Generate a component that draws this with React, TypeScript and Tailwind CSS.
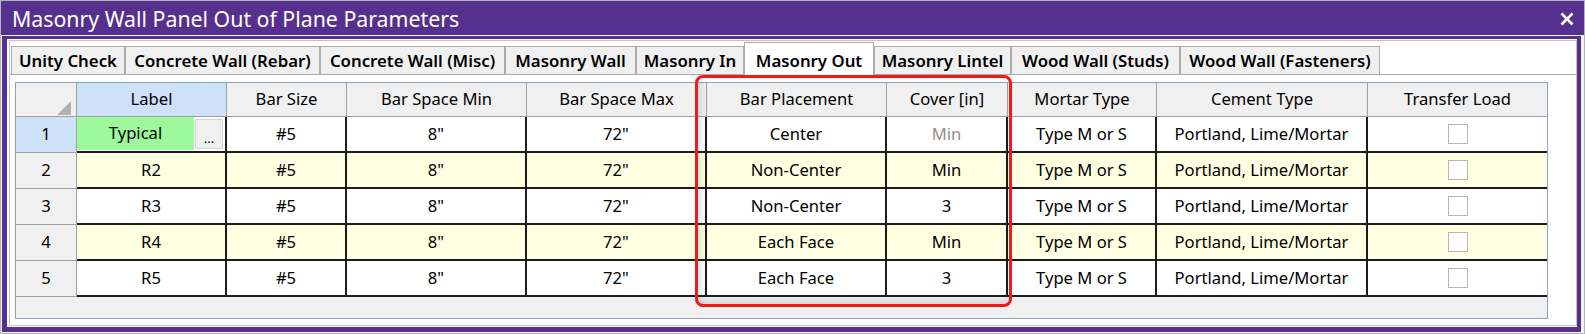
import { Fragment } from 'react';

const tabs = [
    { label: 'Unity Check', w: 'w-[114px]' },
    { label: 'Concrete Wall (Rebar)', w: 'w-[195px]' },
    { label: 'Concrete Wall (Misc)', w: 'w-[185px]' },
    { label: 'Masonry Wall', w: 'w-[131px]' },
    { label: 'Masonry In', w: 'w-[108px]' },
    { label: 'Masonry Out', w: 'w-[130px]', active: true },
    { label: 'Masonry Lintel', w: 'w-[137px]' },
    { label: 'Wood Wall (Studs)', w: 'w-[169px]' },
    { label: 'Wood Wall (Fasteners)', w: 'w-[200px]' },
];

const headers = [
    'Label',
    'Bar Size',
    'Bar Space Min',
    'Bar Space Max',
    'Bar Placement',
    'Cover [in]',
    'Mortar Type',
    'Cement Type',
    'Transfer Load',
];

const rows = [
    { n: 1, label: 'Typical', placement: 'Center', cover: 'Min' },
    { n: 2, label: 'R2', placement: 'Non-Center', cover: 'Min' },
    { n: 3, label: 'R3', placement: 'Non-Center', cover: '3' },
    { n: 4, label: 'R4', placement: 'Each Face', cover: 'Min' },
    { n: 5, label: 'R5', placement: 'Each Face', cover: '3' },
];

export default function App() {
    return (
        <div className="w-[1585px] h-[334px] flex flex-col border border-[#b4b4b4] bg-[#f4f4f4] font-['Noto_Sans',sans-serif] text-black overflow-hidden">
            {/* Title bar */}
            <div className="h-[34px] shrink-0 bg-[#56308e] flex items-center justify-between pl-[11px] pr-[10px] pt-[1px]">
                <span className="text-white text-[21.3px] leading-none">Masonry Wall Panel Out of Plane Parameters</span>
                <svg width="14" height="14" viewBox="0 0 14 14" className="mt-[1px]">
                    <path d="M1.5 1.5 L12.5 12.5 M12.5 1.5 L1.5 12.5" stroke="#fff" strokeWidth="2.6" />
                </svg>
            </div>

            {/* Window frame */}
            <div className="flex-1 flex flex-col mt-[1px] ml-[1px] mr-[3px] mb-[1px] border-[#56308e] border-t-[3px] border-l-[5px] border-r-[4px] border-b-[5px] bg-white pt-[1px] pl-[2px] pb-[1px]">
                <div className="flex-1 flex flex-col border border-[#c4c4c4] bg-white">
                    {/* Tabs */}
                    <div className="h-[33px] shrink-0 flex items-end pl-[1px]">
                        {tabs.map((t) =>
                            t.active ? (
                                <div
                                    key={t.label}
                                    className={`${t.w} h-[33px] -mb-px pt-[4px] pb-[1px] relative z-10 flex items-center justify-center border border-b-0 border-[#acacac] bg-white text-[16.8px] font-semibold`}
                                >
                                    {t.label}
                                </div>
                            ) : (
                                <div
                                    key={t.label}
                                    className={`${t.w} h-[28px] flex items-center justify-center border border-b-0 border-[#acacac] bg-[#f0f0f0] text-[16.8px] font-semibold`}
                                >
                                    {t.label}
                                </div>
                            )
                        )}
                    </div>

                    {/* Tab content */}
                    <div className="flex-1 border-t border-[#acacac] pt-[7px] pl-[5px]">
                        <div className="relative w-[1533px] h-[237px] border border-[#8ea4bd] bg-[#f0f0f0]">
                            <div className="grid grid-cols-[61px_150px_120px_180px_180px_180px_121px_149px_211px_179px] text-[16.6px]">
                                {/* Header row */}
                                <div className="h-[34px] border-r border-b border-[#a0a0a0] bg-[#f0f0f0] flex items-end justify-end pr-[5px] pb-[1px]">
                                    <svg width="14" height="14" viewBox="0 0 14 14">
                                        <polygon points="14,0 14,14 0,14" fill="#b1b1b1" />
                                    </svg>
                                </div>
                                {headers.map((h, i) => (
                                    <div
                                        key={h}
                                        className={`h-[34px] border-b border-[#a0a0a0] flex items-center justify-center ${
                                            i === 0 ? 'bg-[#cde1f9]' : 'bg-[#f0f0f0]'
                                        } ${i === headers.length - 1 ? '' : 'border-r'}`}
                                    >
                                        {h}
                                    </div>
                                ))}

                                {/* Data rows */}
                                {rows.map((r) => {
                                    const bg = r.n % 2 === 0 ? 'bg-[#ffffe1]' : 'bg-white';
                                    const cell = `h-[36px] border-b-2 border-r-2 border-[#1c1c1c] flex items-center justify-center ${bg}`;
                                    return (
                                        <Fragment key={r.n}>
                                            <div
                                                className={`h-[36px] border-r border-b border-[#a0a0a0] flex items-center justify-center ${
                                                    r.n === 1 ? 'bg-[#cde1f9]' : 'bg-[#f0f0f0]'
                                                }`}
                                            >
                                                {r.n}
                                            </div>
                                            {r.n === 1 ? (
                                                <div className="h-[36px] border-b-2 border-r-2 border-[#1c1c1c] flex bg-white">
                                                    <div className="flex-1 bg-[#9cfa9c] flex items-center justify-center mb-[1px]">
                                                        {r.label}
                                                    </div>
                                                    <div className="w-[28px] my-[2px] ml-[1px] mr-[2px] border border-[#cfd6cf] bg-[#f0f0f0] flex items-end justify-center pb-[3px] text-[13px] leading-none">
                                                        ...
                                                    </div>
                                                </div>
                                            ) : (
                                                <div className={cell}>{r.label}</div>
                                            )}
                                            <div className={cell}>#5</div>
                                            <div className={cell}>8"</div>
                                            <div className={cell}>72"</div>
                                            <div className={cell}>{r.placement}</div>
                                            <div className={`${cell} ${r.n === 1 ? 'text-[#8f8f8f]' : ''}`}>{r.cover}</div>
                                            <div className={cell}>Type M or S</div>
                                            <div className={cell}>Portland, Lime/Mortar</div>
                                            <div className={`h-[36px] border-b-2 border-[#1c1c1c] flex items-center justify-center ${bg}`}>
                                                <div className="w-[20px] h-[20px] border border-[#b6b6b6] bg-white" />
                                            </div>
                                        </Fragment>
                                    );
                                })}
                            </div>

                            {/* Red annotation box */}
                            <div className="absolute left-[679px] top-[-8px] w-[317px] h-[232px] rounded-[8px] border-[3px] border-[#ee1b1b] shadow-[inset_3px_-3px_6px_rgba(0,0,0,0.12)] pointer-events-none" />
                        </div>
                    </div>
                </div>
            </div>
        </div>
    );
}
